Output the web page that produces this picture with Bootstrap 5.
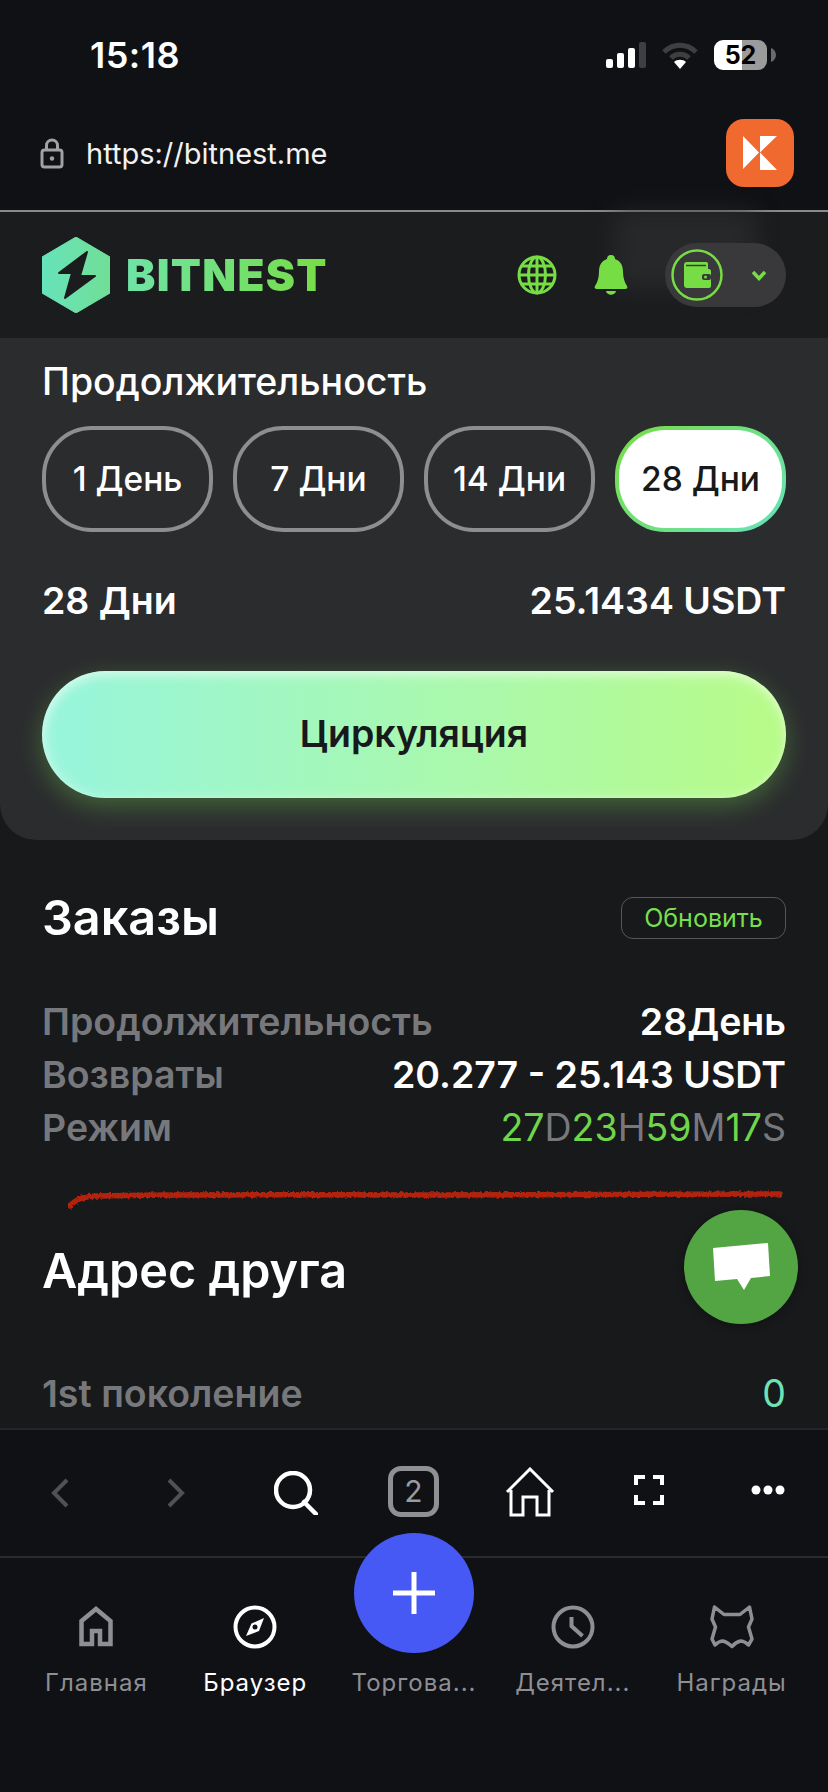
<!doctype html>
<html lang="ru"><head><meta charset="utf-8"><title>Bitnest</title>
<link href="https://cdn.jsdelivr.net/npm/bootstrap@5.3.0/dist/css/bootstrap.min.css" rel="stylesheet">
<style>
html,body{margin:0;background:#101114}
body{font-family:Inter,"Liberation Sans",sans-serif;color:#fff}
.phone{width:828px;height:1792px;position:relative;overflow:hidden;background:#17191b;border-radius:14px 14px 20px 20px}
.topbar{height:212px;background:#101114;border-bottom:2px solid #8a8a8c}
.status-row{height:110px;padding:0 52px 0 90px}
.clock{font-size:36px;font-weight:600;line-height:1;letter-spacing:.5px}
.batt{width:53px;height:30px;border-radius:9px;background:linear-gradient(90deg,#fff 52%,#9b9b9b 52%);color:#000;font-size:25px;font-weight:700;line-height:30px;text-align:center}
.url-row{height:86px;padding:0 34px 0 40px}
.url{font-size:29px;color:#f2f2f2;line-height:1}
.kapp{width:68px;height:68px;border-radius:18px;background:#f0692f}
.site-head{height:126px;background:#1b1c1e;padding:0 42px;position:relative}
.smudge{position:absolute;left:615px;top:0;width:140px;height:76px;background:#2c2d2f;filter:blur(12px);opacity:.75}
.brand{font-size:44px;font-weight:900;line-height:1;letter-spacing:1.3px;background:linear-gradient(90deg,#6fe3a6,#77dd44);-webkit-background-clip:text;background-clip:text;color:transparent}
.wallet-pill{width:121px;height:64px;border-radius:32px;background:#39393b;padding-left:6px;position:relative}
.panel{height:502px;background:#2b2c2e;border-radius:0 0 36px 36px;padding:22px 42px 0}
.panel-title{font-size:37.5px;font-weight:500;line-height:44px}
.pills{margin-top:22px;gap:20px}
.dur{flex:1 1 0;height:106px;border-radius:50px;border:4px solid #8e8e90;background:transparent;color:#fff;font-size:33.5px;font-weight:500;padding:0}
.dur:hover{color:#fff}
.dur-on,.dur-on:hover{color:#17191b;border-color:transparent;background:linear-gradient(#fff,#fff) padding-box,linear-gradient(135deg,#77dd44,#66e3bb) border-box}
.sum-row{margin-top:47px;font-size:37.5px;font-weight:600;line-height:44px}
.go{display:block;width:100%;height:127px;margin-top:48px;border:0;border-radius:64px;font-size:37.5px;font-weight:600;color:#17191b;background:linear-gradient(90deg,#97f5dc,#b8fb88);box-shadow:inset 0 4px 12px rgba(255,255,255,.55),inset 6px 0 14px rgba(255,255,255,.2),0 8px 26px rgba(118,225,80,.32)}
.main-area{flex:1 1 0;padding:0 42px;position:relative;overflow:hidden}
.sect{font-size:48.5px;font-weight:600;line-height:56px}
.refresh{width:165px;height:42px;padding:0;border:1px solid #55575a;border-radius:12px;color:#7adf4f;font-size:25px;line-height:1;background:transparent}
.rows{margin-top:49px;font-size:37.5px;font-weight:600;line-height:53px}
.dim{color:#77787b}
.lime{color:#6fd64a}
.gr{color:#77787b}
.teal{color:#6fe3b8}
.scribble{display:block;margin:34px 0 0 26px}
.chat{position:absolute;left:684px;top:1210px;width:114px;height:114px;border-radius:50%;background:#53a543;box-shadow:0 2px 10px rgba(0,0,0,.3)}
.toolbar{height:130px;background:#101114;border-top:2px solid #24252a;border-bottom:2px solid #2a2b2e;padding:0 40px 0 0}
.tabbar{height:234px;background:#101114;padding:46px 17px 0}
.tabcell{flex:1 1 0;text-align:center}
.tabcell svg{display:block;margin:0 auto;height:46px}
.tablabel{font-size:24px;line-height:30px;letter-spacing:1px;color:#8e8f94;margin-top:18px;white-space:nowrap}
.tablabel-on{color:#fff}
.plus{position:absolute;left:354px;top:1533px;width:120px;height:120px;border-radius:50%;background:#4759f5}
.tabnum{width:51px;height:51px;border:5px solid #8f9094;border-radius:13px;color:#9a9ba0;font-size:30px;line-height:41px;text-align:center;margin-top:-4px}
</style></head><body>
<div class="phone d-flex flex-column">
 <div class="topbar flex-shrink-0">
  <div class="status-row d-flex align-items-center justify-content-between">
   <div class="clock">15:18</div>
   <div class="d-flex align-items-center">
    <svg width="40" height="26" viewBox="0 0 40 26"><rect x="0" y="17" width="7" height="9" rx="2" fill="#fff"/><rect x="11" y="11" width="7" height="15" rx="2" fill="#fff"/><rect x="22" y="6" width="7" height="20" rx="2" fill="#fff"/><rect x="33" y="0" width="7" height="26" rx="2" fill="#3e3f41"/></svg>
    <svg class="ms-3" width="36" height="27" viewBox="0 0 36 27"><path d="M2 10C11 1 25 1 34 10" fill="none" stroke="#3e3f41" stroke-width="5"/><path d="M9 16C14 11 22 11 27 16" fill="none" stroke="#3e3f41" stroke-width="5"/><path d="M18 27l-6-7c3-3 9-3 12 0z" fill="#fff"/></svg>
    <div class="batt ms-3">52</div>
    <svg width="5" height="14" viewBox="0 0 5 14" class="ms-1"><path d="M0 0c3 1 5 4 5 7s-2 6-5 7z" fill="#6a6a6c"/></svg>
   </div>
  </div>
  <div class="url-row d-flex align-items-center justify-content-between">
   <div class="d-flex align-items-center">
    <svg width="24" height="31" viewBox="0 0 24 31" fill="none"><rect x="2" y="12" width="20" height="17" rx="2.5" stroke="#a0a1a5" stroke-width="3"/><path d="M6.5 12V7.5a5.5 5.5 0 0 1 11 0V12" stroke="#a0a1a5" stroke-width="3"/><circle cx="12" cy="20.5" r="2.2" fill="#a0a1a5"/></svg>
    <span class="url" style="margin-left:22px">https://bitnest.me</span>
   </div>
   <div class="kapp d-flex align-items-center justify-content-center">
    <svg width="34" height="34" viewBox="0 0 34 34"><path d="M0 0V33L16 16.500zM17 0H34L17 16.500zM17 16.500L34 34H17z" fill="#fff"/></svg>
   </div>
  </div>
 </div>

 <div class="site-head flex-shrink-0 d-flex align-items-center justify-content-between">
  <div class="smudge"></div>
  <div class="d-flex align-items-center position-relative" style="gap:16px">
   <svg width="68" height="76" viewBox="0 0 68 76"><defs><linearGradient id="hx" x1="0" y1="0" x2="1" y2="0"><stop offset="0" stop-color="#66e3bb"/><stop offset="1" stop-color="#72de96"/></linearGradient></defs><path d="M34 0L68 20V56L34 76L0 56V20Z" fill="url(#hx)" stroke="url(#hx)" stroke-width="1" stroke-linejoin="round"/><path d="M45 15L17 36H30L23 61L53 39H38Z" fill="#1b1c1e" stroke="#1b1c1e" stroke-width="2" stroke-linejoin="round"/></svg>
   <span class="brand">BITNEST</span>
  </div>
  <div class="d-flex align-items-center position-relative">
   <svg width="40" height="40" viewBox="0 0 40 40" fill="none" stroke="#77dd44" stroke-width="3"><circle cx="20" cy="20" r="18"/><ellipse cx="20" cy="20" rx="8.500" ry="18"/><path d="M20 2V38M2 20H38M5 11H35M5 29H35"/></svg>
   <svg style="margin-left:37px" width="34" height="40" viewBox="0 0 34 40"><path d="M17 0c3 0 4 2 4 4 6 2 8 7 8 13 0 6 2 11 4 14 1 2 0 3-2 3H3c-2 0-3-1-2-3 2-3 4-8 4-14 0-6 2-11 8-13 0-2 1-4 4-4z" fill="#77dd44"/><path d="M12 36h10c-1 5-9 5-10 0z" fill="#77dd44"/></svg>
   <div class="wallet-pill d-flex align-items-center" style="margin-left:37px">
    <svg width="52" height="52" viewBox="0 0 52 52" fill="none"><circle cx="26" cy="26" r="24.500" stroke="#77dd44" stroke-width="2.500"/><path d="M13 16c0-2 1-3 3-3h19c2 0 2 1 2 3v4h1c1 0 2 1 2 2v15c0 1-1 2-2 2H16c-2 0-3-1-3-3z" fill="#77dd44"/><path d="M15 16.500H35" stroke="#39393b" stroke-width="1.500"/><rect x="31" y="25" width="9" height="6" rx="2" fill="#39393b"/><circle cx="34.500" cy="28" r="1.500" fill="#77dd44"/></svg>
    <svg style="margin-left:28px" width="16" height="11" viewBox="0 0 16 11" fill="none"><path d="M2 2L8 8.500L14 2" stroke="#77dd44" stroke-width="3.500"/></svg>
   </div>
  </div>
 </div>

 <div class="panel flex-shrink-0">
  <div class="panel-title">Продолжительность</div>
  <div class="pills d-flex">
   <button class="btn dur">1 День</button><button class="btn dur">7 Дни</button><button class="btn dur">14 Дни</button><button class="btn dur dur-on">28 Дни</button>
  </div>
  <div class="sum-row d-flex justify-content-between"><span>28 Дни</span><span>25.1434 USDT</span></div>
  <button class="btn go">Циркуляция</button>
 </div>

 <div class="main-area">
  <div class="d-flex justify-content-between align-items-center" style="margin-top:50px">
   <div class="sect">Заказы</div><button class="btn refresh">Обновить</button>
  </div>
  <div class="rows">
   <div class="d-flex justify-content-between"><span class="dim">Продолжительность</span><span>28День</span></div>
   <div class="d-flex justify-content-between"><span class="dim">Возвраты</span><span>20.277 - 25.143 USDT</span></div>
   <div class="d-flex justify-content-between"><span class="dim">Режим</span><span style="font-weight:400"><span class="lime">27</span><span class="gr">D</span><span class="lime">23</span><span class="gr">H</span><span class="lime">59</span><span class="gr">M</span><span class="lime">17</span><span class="gr">S</span></span></div>
  </div>
  <svg class="scribble" width="716" height="22" viewBox="0 0 716 22"><defs><filter id="rough" x="-2%" y="-60%" width="104%" height="220%"><feTurbulence type="fractalNoise" baseFrequency=".35" numOctaves="2" seed="4"/><feDisplacementMap in="SourceGraphic" scale="4"/></filter></defs><path d="M2 18C8 11 14 9 28 8C120 6 240 7 360 7C480 7 600 7 712 6" fill="none" stroke="#b32410" stroke-width="5.500" stroke-linecap="round" filter="url(#rough)"/></svg>
  <div class="sect" style="margin-top:33px">Адрес друга</div>
  <div class="d-flex justify-content-between" style="margin-top:73px;font-size:37.5px;font-weight:600;line-height:44px"><span class="dim">1st поколение</span><span class="teal" style="font-weight:400">0</span></div>
 </div>

 <div class="toolbar flex-shrink-0 d-flex align-items-center" style="position:relative">
  <svg style="margin-left:50px" width="20" height="30" viewBox="0 0 20 30" fill="none"><path d="M17 2L4 15L17 28" stroke="#505154" stroke-width="4"/></svg>
  <svg style="margin-left:96px" width="20" height="30" viewBox="0 0 20 30" fill="none"><path d="M3 2L16 15L3 28" stroke="#505154" stroke-width="4"/></svg>
  <svg style="margin-left:88px" width="44" height="44" viewBox="0 0 44 44" fill="none" stroke="#fff" stroke-width="4.500"><circle cx="19" cy="19" r="17"/><path d="M30 31L42 43" stroke-linecap="round"/></svg>
  <div class="tabnum" style="margin-left:70px">2</div>
  <svg style="margin-left:66px;margin-top:-2px" width="50" height="50" viewBox="0 0 50 50" fill="none" stroke="#fff" stroke-width="3"><path d="M2 25L25 2L48 25M6 23V48H18V30H32V48H44V23"/></svg>
  <svg style="margin-left:79px;margin-top:-6px" width="30" height="30" viewBox="0 0 30 30" fill="none" stroke="#fff" stroke-width="4"><path d="M2 10V2H11M19 2H28V10M2 20V28H11M19 28H28V20"/></svg>
  <svg style="margin-left:87px;margin-top:-6px" width="34" height="10" viewBox="0 0 34 10" fill="#fff"><circle cx="5" cy="5" r="4.500"/><circle cx="17" cy="5" r="4.500"/><circle cx="29" cy="5" r="4.500"/></svg>
 </div>

 <div class="tabbar flex-shrink-0 d-flex">
  <div class="tabcell"><svg width="34" height="46" viewBox="0 0 34 46" fill="none" stroke="#8e8f94" stroke-width="4.500"><path d="M2.500 17L17 5L31.500 17V40H21V27H13V40H2.500Z"/></svg><div class="tablabel">Главная</div></div>
  <div class="tabcell"><svg width="46" height="46" viewBox="0 0 46 46" fill="none"><circle cx="23" cy="23" r="19.500" stroke="#fff" stroke-width="4"/><path d="M32 14L27 27L14 32L19.500 19.500Z" fill="#fff"/><circle cx="23" cy="23" r="2.500" fill="#101114"/></svg><div class="tablabel tablabel-on">Браузер</div></div>
  <div class="tabcell"><svg width="46" height="46" viewBox="0 0 46 46"></svg><div class="tablabel">Торгова...</div></div>
  <div class="tabcell"><svg width="46" height="46" viewBox="0 0 46 46" fill="none" stroke="#8e8f94" stroke-width="4"><circle cx="23" cy="23" r="19.500"/><path d="M21.500 13V22L32.500 32"/></svg><div class="tablabel">Деятел...</div></div>
  <div class="tabcell"><svg width="44" height="46" viewBox="0 0 44 46" fill="none" stroke="#8e8f94" stroke-width="3.500" stroke-linejoin="round"><path d="M4.500 3L14 10.500H30L39.500 3L42 15L38.500 23L42 35L38.500 41Q34.500 37 30.500 37Q26 38 22 42.500Q17 38 13 37Q9 37 5 41L2 35L5.500 23L2 15Z"/></svg><div class="tablabel">Награды</div></div>
 </div>

 <div class="chat d-flex align-items-center justify-content-center">
  <svg width="58" height="48" viewBox="0 0 58 48"><path d="M1 5L56 0L58 33L39 35L32 47L25 36L3 38Z" fill="#fff"/></svg>
 </div>
 <div class="plus d-flex align-items-center justify-content-center">
  <svg width="42" height="42" viewBox="0 0 42 42"><path d="M18.500 0H23.500V18.500H42V23.500H23.500V42H18.500V23.500H0V18.500H18.500Z" fill="#fff"/></svg>
 </div>
</div>
<script src="https://cdn.jsdelivr.net/npm/bootstrap@5.3.0/dist/js/bootstrap.bundle.min.js"></script>
</body></html>
